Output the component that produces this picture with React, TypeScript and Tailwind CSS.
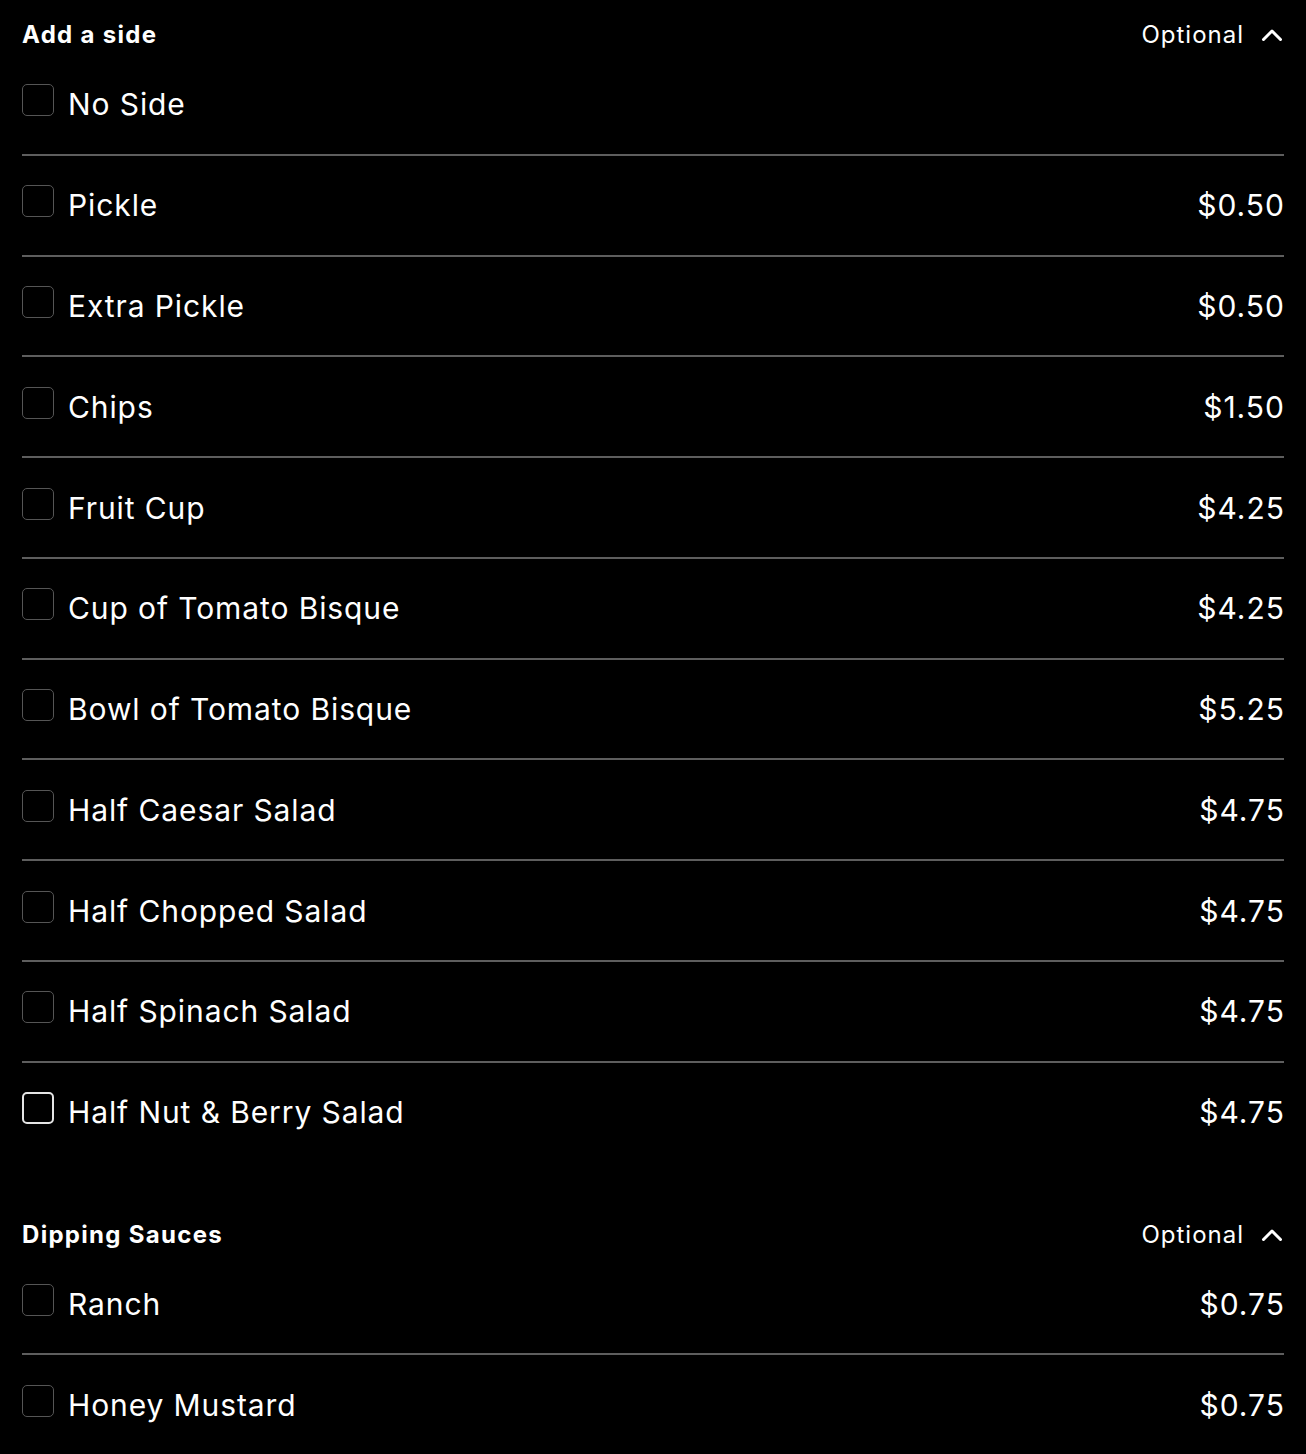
import React from "react";

type Item = { name: string; price?: string; focus?: boolean };

const sides: Item[] = [
  { name: "No Side" },
  { name: "Pickle", price: "$0.50" },
  { name: "Extra Pickle", price: "$0.50" },
  { name: "Chips", price: "$1.50" },
  { name: "Fruit Cup", price: "$4.25" },
  { name: "Cup of Tomato Bisque", price: "$4.25" },
  { name: "Bowl of Tomato Bisque", price: "$5.25" },
  { name: "Half Caesar Salad", price: "$4.75" },
  { name: "Half Chopped Salad", price: "$4.75" },
  { name: "Half Spinach Salad", price: "$4.75" },
  { name: "Half Nut & Berry Salad", price: "$4.75", focus: true },
];

const sauces: Item[] = [
  { name: "Ranch", price: "$0.75" },
  { name: "Honey Mustard", price: "$0.75" },
];

function Chevron() {
  return (
    <svg width="24" height="24" viewBox="0 0 24 24" fill="none" stroke="currentColor" strokeWidth="3" strokeLinecap="round" strokeLinejoin="round">
      <path d="M3.5 16.5L12 8l8.5 8.5" />
    </svg>
  );
}

function Section({ title, items }: { title: string; items: Item[] }) {
  return (
    <div className="flex flex-col">
      <div className="flex items-center justify-between h-[40px]">
        <h3 className="text-[24px] font-bold leading-[40px] tracking-[1.3px]">{title}</h3>
        <div className="flex items-center gap-[16px] text-[24px] leading-[40px]">
          <span className="tracking-[1px]">Optional</span>
          <Chevron />
        </div>
      </div>
      <div className="flex flex-col">
        {items.map((it, i) => (
          <div
            key={it.name}
            className={
              "flex items-start py-[29.4px] " +
              (i < items.length - 1 ? "border-b-2 border-[#5e5e5e]" : "")
            }
          >
            <div
              className={
                "w-[32px] h-[32px] rounded-[5px] shrink-0 " +
                (it.focus ? "border-2 border-[#e5e5e5]" : "border border-[#555555]")
              }
            />
            <span className="ml-[14px] text-[30px] leading-[40px] tracking-[0.9px] flex-1">{it.name}</span>
            {it.price && <span className="text-[30px] leading-[40px] tracking-[1px] mr-[-1px]">{it.price}</span>}
          </div>
        ))}
      </div>
    </div>
  );
}

export default function App() {
  return (
    <div
      className="w-[1306px] min-h-[1454px] bg-black text-white px-[22px] pt-[15px] flex flex-col gap-[53px]"
      style={{ fontFamily: "Inter, 'Noto Sans', sans-serif" }}
    >
      <Section title="Add a side" items={sides} />
      <Section title="Dipping Sauces" items={sauces} />
    </div>
  );
}
